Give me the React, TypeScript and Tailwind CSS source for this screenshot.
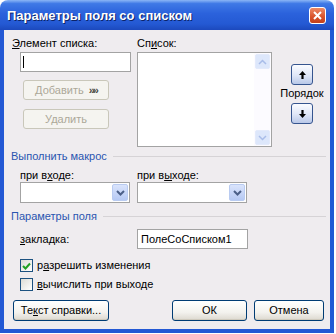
import React from "react"

const frame = "border-[#2358d4]"

function U({ children }: { children: React.ReactNode }) {
  return <span className="underline underline-offset-[1px]">{children}</span>
}

function Arrow({ down }: { down?: boolean }) {
  return (
    <svg width="7" height="8" viewBox="0 0 7 8" className={down ? "rotate-180" : ""}>
      <polygon points="3.5,0 7,4 4.6,4 4.6,8 2.4,8 2.4,4 0,4" fill="#000" />
    </svg>
  )
}

function Chevron({ down, color, width = 1.5 }: { down?: boolean; color: string; width?: number }) {
  return (
    <svg width="9" height="6" viewBox="0 0 9 6">
      <polyline
        points={down ? "1,1 4.5,4.5 8,1" : "1,5 4.5,1.5 8,5"}
        fill="none"
        stroke={color}
        strokeWidth={width}
      />
    </svg>
  )
}

function Combo() {
  return (
    <div className="w-[110px] h-[21px] border border-[#a3a3a3] bg-white flex justify-end p-px">
      <div className="w-[16px] h-full rounded-[2px] border border-[#b9cbf1] bg-[linear-gradient(to_bottom,#dae4fc,#b6c9f4)] flex items-center justify-center">
        <Chevron down color="#4b5f88" width={2} />
      </div>
    </div>
  )
}

function Header({ title }: { title: string }) {
  return (
    <div className="flex items-center h-[13px] pl-[7px] pr-[4px]">
      <span className="text-[#2a55b0]">{title}</span>
      <div className="flex-1 ml-[6px] h-px bg-[#d6d3d6]" />
    </div>
  )
}

const btn =
  "h-[21px] border border-[#003c74] rounded-[3px] bg-[linear-gradient(to_bottom,#ffffff,#f3f2ee_60%,#dcd8cf)] flex items-center justify-center shadow-[inset_0_-1px_0_#cfcabd]"

const btnOff =
  "h-[20px] border border-[#c9c7ba] rounded-[3px] bg-[#f5f4f0] text-[#aca899] flex items-center justify-center"

const orderBtn =
  "w-[22px] h-[21px] border border-[#36558f] rounded-[3px] bg-[linear-gradient(to_bottom,#fbfcff,#dfe6f7_55%,#b9c8e8)] flex items-center justify-center"

export default function App() {
  return (
    <div className="w-[336px] h-[334px] bg-white font-['Liberation_Sans',Arial,sans-serif] text-[11px] leading-[13px] text-black">
      <div className="w-[334px] h-[333px] flex flex-col rounded-t-[8px] overflow-hidden">
        <div className="h-[30px] shrink-0 flex items-center justify-between pl-[7px] pr-[8px] bg-[linear-gradient(to_bottom,#8bb6f6_0%,#3f79e6_12%,#2b62dc_45%,#2459d3_80%,#1c49bd_100%)]">
          <span className="text-white font-bold text-[13px] [text-shadow:1px_1px_0_#0c2468]">
            Параметры поля со списком
          </span>
          <div className="w-[17px] h-[17px] rounded-[3px] border border-white bg-[linear-gradient(to_bottom,#ee8a66,#d8522a_60%,#c2401c)] flex items-center justify-center">
            <svg width="9" height="9" viewBox="0 0 9 9">
              <path d="M1 1L8 8M8 1L1 8" stroke="#fff" strokeWidth="2" />
            </svg>
          </div>
        </div>

        <div className={`flex-1 bg-[#efecef] border-x-4 border-b-4 ${frame} flex flex-col pt-[7px]`}>
          <div className="flex">
            <div className="w-[133px] pl-[8px] flex flex-col items-start">
              <span>
                <U>Э</U>лемент списка:
              </span>
              <div className="ml-[8px] mt-[2px] w-[111px] h-[20px] border border-[#a3a3a3] bg-white flex items-center pl-[2px]">
                <div className="w-px h-[12px] bg-black" />
              </div>
              <div className={`${btnOff} ml-[11px] mt-[8px] w-[86px] gap-[5px]`}>
                <span>Добавить</span>
                <span className="text-[#4a4a44] text-[11px] font-bold tracking-[-2px]">»»</span>
              </div>
              <div className={`${btnOff} ml-[11px] mt-[9px] w-[86px]`}>Удалить</div>
            </div>

            <div className="w-[135px] flex flex-col">
              <span>
                Сп<U>и</U>сок:
              </span>
              <div className="mt-[2px] h-[95px] border border-[#a3a3a3] bg-white flex justify-end">
                <div className="w-[17px] h-full bg-[#fcfbff] flex flex-col justify-between p-[1px]">
                  <div className="h-[15px] rounded-[2px] border border-[#e3eafb] bg-[#dde7fb] flex items-center justify-center">
                    <Chevron color="#a9bde9" />
                  </div>
                  <div className="h-[15px] rounded-[2px] border border-[#e3eafb] bg-[#dde7fb] flex items-center justify-center">
                    <Chevron down color="#a9bde9" />
                  </div>
                </div>
              </div>
            </div>

            <div className="ml-[6px] w-[48px] flex flex-col items-center pt-[27px]">
              <div className={orderBtn}>
                <Arrow />
              </div>
              <span className="mt-[2px]">Порядок</span>
              <div className={`${orderBtn} mt-[3px]`}>
                <Arrow down />
              </div>
            </div>
          </div>

          <div className="mt-[3px]">
            <Header title="Выполнить макрос" />
          </div>

          <div className="mt-[6px] flex pl-[16px]">
            <div className="w-[117px] flex flex-col">
              <span>
                при в<U>х</U>оде:
              </span>
              <Combo />
            </div>
            <div className="flex flex-col">
              <span>
                при в<U>ы</U>ходе:
              </span>
              <Combo />
            </div>
          </div>

          <div className="mt-[7px]">
            <Header title="Параметры поля" />
          </div>

          <div className="mt-[6px] flex items-center pl-[16px] h-[20px]">
            <span className="w-[117px]">
              <U>з</U>акладка:
            </span>
            <div className="w-[111px] h-[20px] border border-[#a3a3a3] bg-white flex items-center pl-[3px]">
              ПолеСоСписком1
            </div>
          </div>

          <div className="mt-[10px] flex items-center pl-[16px] gap-[4px]">
            <div className="w-[13px] h-[13px] border border-[#1c5180] bg-[linear-gradient(135deg,#dcdcd5,#ffffff)] flex items-center justify-center">
              <svg width="9" height="8" viewBox="0 0 9 8">
                <polyline points="1,4 3.5,6.5 8,1.5" fill="none" stroke="#21a121" strokeWidth="2" />
              </svg>
            </div>
            <span>
              р<U>а</U>зрешить изменения
            </span>
          </div>

          <div className="mt-[6px] flex items-center pl-[16px] gap-[4px]">
            <div className="w-[13px] h-[13px] border border-[#1c5180] bg-[linear-gradient(135deg,#dcdcd5,#ffffff)]" />
            <span>
              <U>в</U>ычислить при выходе
            </span>
          </div>

          <div className="mt-[9px] flex pl-[9px]">
            <div className={`${btn} w-[96px]`}>
              <span>
                Те<U>к</U>ст справки...
              </span>
            </div>
            <div className={`${btn} w-[75px] ml-[63px]`}>ОК</div>
            <div className={`${btn} w-[70px] ml-[7px]`}>Отмена</div>
          </div>
        </div>
      </div>
    </div>
  )
}
